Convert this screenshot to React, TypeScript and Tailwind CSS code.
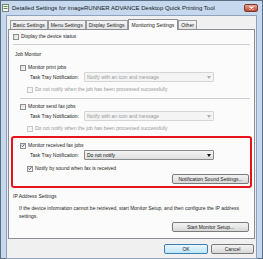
import React from 'react';

const FONT = { fontFamily: '"Liberation Sans", Arial, sans-serif' };

const Check = ({ checked = false, disabled = false }: { checked?: boolean; disabled?: boolean }) => (
  <span
    className={`flex h-[6px] w-[6px] shrink-0 items-center justify-center border ${
      disabled ? 'border-[#c8c8c8] bg-[#f4f4f4]' : 'border-[#8f8f8f] bg-gradient-to-br from-[#dcdcdc] to-[#fbfbfb]'
    }`}
  >
    {checked && (
      <svg width="5" height="5" viewBox="0 0 5 5">
        <path d="M0.8 2.6 L2 3.8 L4.3 0.9" fill="none" stroke="#2a3e6a" strokeWidth="1" />
      </svg>
    )}
  </span>
);

const CheckRow = ({
  label,
  checked,
  disabled,
  indent
}: {
  label: string;
  checked?: boolean;
  disabled?: boolean;
  indent: string;
}) => (
  <div className={`flex h-[7px] items-center gap-[2px] ${indent}`}>
    <Check checked={checked} disabled={disabled} />
    <span className={disabled ? 'text-[#9a9a9a]' : 'text-[#1e1e1e]'}>{label}</span>
  </div>
);

const Select = ({ value, disabled }: { value: string; disabled?: boolean }) => (
  <div
    className={`flex h-[10px] w-[130px] items-center justify-between rounded-[1px] border px-[2px] ${
      disabled
        ? 'border-[#d5d5d5] bg-[#f4f4f4] text-[#9a9a9a]'
        : 'border-[#8a8a8a] bg-gradient-to-b from-[#f4f4f4] to-[#dedede] text-[#111]'
    }`}
  >
    <span>{value}</span>
    <svg width="4" height="3" viewBox="0 0 4 3">
      <path d="M0 0 H4 L2 3 Z" fill={disabled ? '#b0b0b0' : '#111'} />
    </svg>
  </div>
);

const TrayRow = ({ value, disabled, mt }: { value: string; disabled?: boolean; mt: string }) => (
  <div className={`flex h-[10px] items-center pl-[17px] ${mt}`}>
    <span className="w-[54px] text-[#1e1e1e]">Task Tray Notification:</span>
    <Select value={value} disabled={disabled} />
  </div>
);

const Button = ({ label, className = '' }: { label: string; className?: string }) => (
  <div
    className={`flex h-[10px] items-center justify-center rounded-[2px] border border-[#7a7a7a] bg-gradient-to-b from-[#f3f3f3] to-[#d8d8d8] text-[#1e1e1e] ${className}`}
  >
    {label}
  </div>
);

const TABS = ['Basic Settings', 'Menu Settings', 'Display Settings', 'Monitoring Settings', 'Other'];

export default function App() {
  return (
    <div
      style={FONT}
      className="flex h-[259px] w-[263px] flex-col border border-[#5b6f86] bg-[#c5d8ee] text-[5px] leading-none"
    >
      {/* title bar */}
      <div className="flex h-[14px] shrink-0 items-center pl-[1px] pr-[4px]">
        <svg width="7" height="8" viewBox="0 0 7 8" className="shrink-0">
          <rect x="0.5" y="0.5" width="6" height="7" fill="#f4f4f4" stroke="#7a8a70" />
          <rect x="1.5" y="2" width="4" height="1" fill="#4d9a3a" />
          <rect x="1.5" y="4" width="4" height="1" fill="#7a7a7a" />
        </svg>
        <span className="ml-[3px] text-[6px] text-[#1a1a1a]">
          Detailed Settings for imageRUNNER ADVANCE Desktop Quick Printing Tool
        </span>
        <div className="ml-auto flex h-[8px] w-[14px] items-center justify-center rounded-[2px] border border-[#7a3a32] bg-gradient-to-b from-[#e8a493] to-[#c4422e]">
          <svg width="5" height="4" viewBox="0 0 5 4">
            <path d="M0.5 0.5 L4.5 3.5 M4.5 0.5 L0.5 3.5" stroke="#fff" strokeWidth="1.1" />
          </svg>
        </div>
      </div>

      {/* client area */}
      <div className="mx-[5px] flex flex-1 flex-col border border-[#8ea3bb] bg-[#f0f0f0] px-[1px] pb-[4px] pt-[2px]">
        <div className="flex h-[11px] items-end pl-[2px]">
          {TABS.map(tab => {
            const active = tab === 'Monitoring Settings';
            return (
              <div
                key={tab}
                className={`-mb-[1px] flex items-center border border-b-0 px-[2px] ${
                  active
                    ? 'z-10 h-[11px] border-[#8a8d94] bg-[#fbfbfb] px-[3px]'
                    : 'h-[10px] border-[#9a9ca3] bg-gradient-to-b from-[#f4f4f4] to-[#e2e2e2]'
                }`}
              >
                <span className="text-[#1e1e1e]">{tab}</span>
              </div>
            );
          })}
        </div>

        <div className="flex h-[210px] flex-col border border-[#8a8d94] bg-[#fbfbfb] px-[4px] pt-[3px]">
          <CheckRow label="Display the device status" indent="" />
          <div className="mt-[4px] h-px bg-[#cfcfcf]" />
          <div className="mt-[7px] h-[7px] pl-[2px] text-[#1e1e1e]">Job Monitor</div>

          <CheckRow label="Monitor print jobs" indent="pl-[7px] mt-[5px]" />
          <TrayRow value="Notify with an icon and message" disabled mt="mt-[1px]" />
          <CheckRow
            label="Do not notify when the job has been processed successfully"
            disabled
            indent="pl-[14px] mt-[4px]"
          />
          <div className="ml-[7px] mt-[5px] h-px bg-[#cfcfcf]" />

          <CheckRow label="Monitor send fax jobs" indent="pl-[7px] mt-[4px]" />
          <TrayRow value="Notify with an icon and message" disabled mt="mt-[1px]" />
          <CheckRow
            label="Do not notify when the job has been processed successfully"
            disabled
            indent="pl-[14px] mt-[4px]"
          />

          <div className="-mx-[2px] mt-[4px] flex h-[52px] flex-col rounded-[3px] border-2 border-[#e8141c] pr-[1px] pt-[4px]">
            <CheckRow label="Monitor received fax jobs" checked indent="pl-[7px]" />
            <TrayRow value="Do not notify" mt="mt-[1px]" />
            <CheckRow label="Notify by sound when fax is received" checked indent="pl-[14px] mt-[5px]" />
            <div className="mt-[2px] flex justify-end">
              <Button label="Notification Sound Settings..." className="w-[77px]" />
            </div>
          </div>

          <div className="mt-[6px] h-[7px] text-[#1e1e1e]">IP Address Settings</div>
          <div className="mt-[3px] pl-[6px] pr-[4px] leading-[8px] text-[#1e1e1e]">
            If the device information cannot be retrieved, start Monitor Setup, and then configure the IP address
            settings.
          </div>
          <div className="mt-[2px] flex justify-end pr-[1px]">
            <Button label="Start Monitor Setup..." className="w-[77px]" />
          </div>
        </div>

        <div className="mt-[5px] flex justify-end gap-[3px] pr-[1px]">
          <div className="flex h-[10px] w-[44px] items-center justify-center rounded-[2px] border border-[#3c7fb1] bg-gradient-to-b from-[#eaf6fd] to-[#bee6fd] text-[#1e1e1e]">
            OK
          </div>
          <Button label="Cancel" className="w-[43px]" />
        </div>
      </div>
    </div>
  );
}
